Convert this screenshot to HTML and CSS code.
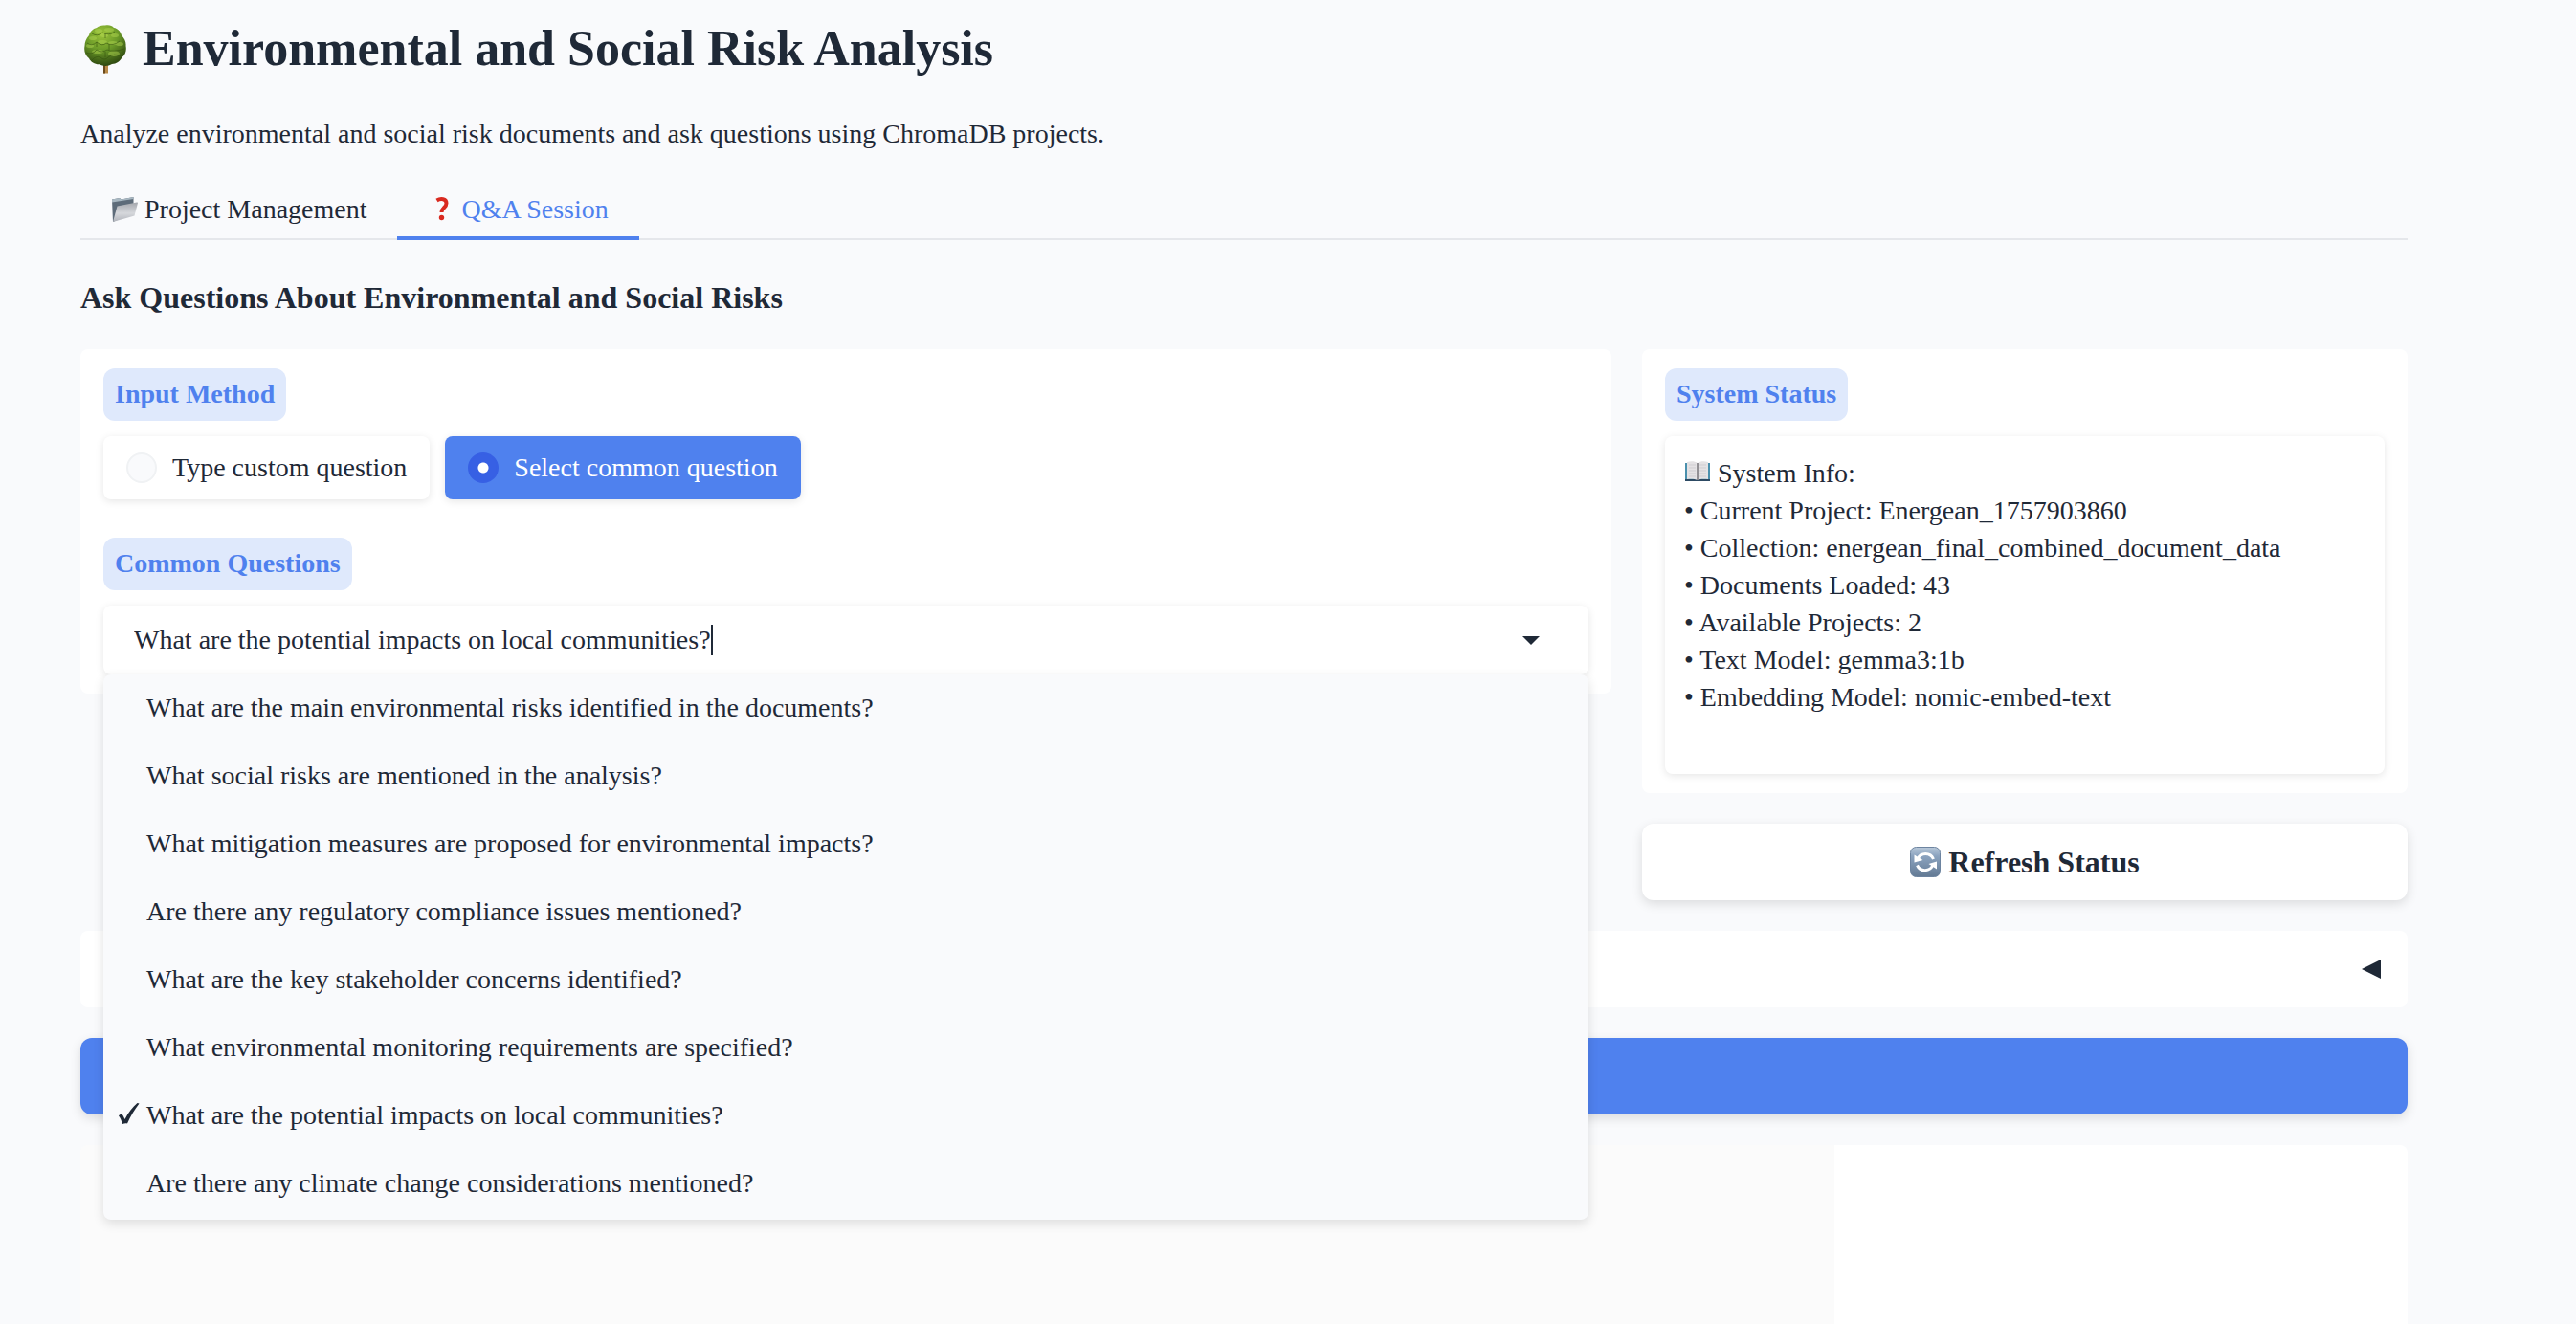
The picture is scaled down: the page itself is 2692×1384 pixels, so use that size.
FILE: index.html
```html
<!DOCTYPE html>
<html lang="en">
<head>
<meta charset="utf-8">
<title>Environmental and Social Risk Analysis</title>
<meta name="viewport" content="width=device-width, initial-scale=1">
<link rel="stylesheet" href="styles.css">
</head>
<body>
<main class="app">
  <h1 class="title">
    <svg class="tree" viewBox="0 0 46 51" aria-hidden="true">
      <defs>
        <radialGradient id="leaf" cx="42%" cy="22%" r="78%">
          <stop offset="0" stop-color="#9cc43a"/>
          <stop offset="0.5" stop-color="#6b9a28"/>
          <stop offset="1" stop-color="#2f4a10"/>
        </radialGradient>
      </defs>
      <path d="M21 40h5v10.500h-5z" fill="#b98a48"/>
      <path d="M21 40h2v10.500h-2z" fill="#6b4a1c"/>
      <path d="M23 .5c4-.8 7 .3 9 2.500 4 .5 7 4 8 8 3 3 5 7 4.500 11 1 5-.5 9-4 12-2 4-6 7-10.500 7-4 2.500-9 2.500-13 .3-5 .2-9-2.300-11-6.300C2 32 .500 27 1.500 22c0-4 1.500-8 4.500-11 1-4 4-7 8-8 2-1.700 5-3 9-2.500z" fill="url(#leaf)"/>
      <g fill="#b3d853" opacity="0.45">
        <ellipse cx="16" cy="6" rx="4" ry="2"/><ellipse cx="27" cy="5" rx="5" ry="2"/><ellipse cx="22" cy="11" rx="4" ry="2"/>
        <ellipse cx="10" cy="14" rx="4" ry="2"/><ellipse cx="33" cy="11" rx="4" ry="2"/><ellipse cx="20" cy="18" rx="5" ry="2"/>
        <ellipse cx="31" cy="19" rx="5" ry="2"/><ellipse cx="7" cy="22" rx="4" ry="2"/><ellipse cx="38" cy="20" rx="4" ry="2"/>
        <ellipse cx="15" cy="28" rx="6" ry="2"/><ellipse cx="32" cy="30" rx="6" ry="3"/>
      </g>
      <g fill="none" stroke="#36540f" stroke-width="1" opacity="0.6">
        <path d="M9 9q6 4 11-1q7 4 13-1M4 19q5 4 10-1q6 5 10 1q7 4 14-2M3 29q6 3 11-3q5 4 11 0q6 3 18-1M9 37q4-5 9-3q4 4 8 0q6-5 14-1M23 9v5M14 18v5M27 20v6M23 28v6"/>
      </g>
    </svg>
    <span>Environmental and Social Risk Analysis</span>
  </h1>
  <p class="lead">Analyze environmental and social risk documents and ask questions using ChromaDB projects.</p>

  <div class="tabs" role="tablist">
    <button class="tab" type="button" role="tab" aria-selected="false">
      <svg class="folder" viewBox="0 0 28 30" aria-hidden="true">
        <defs>
          <linearGradient id="flap" x1="0" y1="0" x2="0" y2="1">
            <stop offset="0" stop-color="#a4a7ad"/><stop offset="0.55" stop-color="#d6d8dc"/><stop offset="1" stop-color="#b0b3ba"/>
          </linearGradient>
        </defs>
        <path d="M1 4.500l8-1.500 1.500 1.500 13-2.500v17L2 28z" fill="#5d6b79"/>
        <path d="M1 4.500l8-1.500 1.500 1.500 13-2.500v2L1 7.500z" fill="#a9b8c2"/>
        <path d="M6.500 11.500l20.500-4c.8 0 1 .4.900 1L24.500 21.500 2 28z" fill="url(#flap)"/>
      </svg>
      <span>Project Management</span>
    </button>
    <button class="tab tab-active" type="button" role="tab" aria-selected="true">
      <svg class="question" viewBox="0 0 28 30" aria-hidden="true">
        <path d="M9.500 5.500c4-2.500 10-2 10 3 0 4.500-5 4.500-5 9.500" fill="none" stroke="#d92a20" stroke-width="4"/>
        <circle cx="14.500" cy="23.500" r="2.700" fill="#d92a20"/>
      </svg>
      <span>Q&amp;A Session</span>
    </button>
  </div>

  <h3 class="section-title">Ask Questions About Environmental and Social Risks</h3>

  <div class="stack">
    <div class="columns">
      <section class="card">
        <fieldset class="group">
          <legend class="badge">Input Method</legend>
          <div class="choices">
            <label class="choice"><input class="radio" type="radio" name="method">Type custom question</label>
            <label class="choice choice-on"><input class="radio" type="radio" name="method" checked>Select common question</label>
          </div>
        </fieldset>
        <div class="group">
          <label class="badge" for="common">Common Questions</label>
          <div class="combo">
            <div class="combo-field">
              <input class="combo-input" id="common" type="text" role="combobox" aria-expanded="true" aria-controls="common-list" value="What are the potential impacts on local communities?">
              <span class="caret" aria-hidden="true"></span>
              <svg class="chevron" viewBox="0 0 18 9" aria-hidden="true"><path d="M0 0h18L9 9z" fill="#1f2937"/></svg>
            </div>
            <ul class="options" id="common-list" role="listbox">
              <li class="option" role="option">What are the main environmental risks identified in the documents?</li>
              <li class="option" role="option">What social risks are mentioned in the analysis?</li>
              <li class="option" role="option">What mitigation measures are proposed for environmental impacts?</li>
              <li class="option" role="option">Are there any regulatory compliance issues mentioned?</li>
              <li class="option" role="option">What are the key stakeholder concerns identified?</li>
              <li class="option" role="option">What environmental monitoring requirements are specified?</li>
              <li class="option" role="option" aria-selected="true"><svg class="check" viewBox="0 0 22 22" aria-hidden="true"><path d="M0 13.500c1.500-2 4-2 5 .5l1.500 3C10 10 14.500 4.500 19.500 0l2 .5C16.500 7 12.500 13.500 9 21.500 7.500 21 5.500 21.500 4 22 3 18.500 1.500 15 0 13.500z" fill="#1f2937"/></svg>What are the potential impacts on local communities?</li>
              <li class="option" role="option">Are there any climate change considerations mentioned?</li>
            </ul>
          </div>
        </div>
      </section>

      <div class="side">
        <section class="card">
          <div class="group">
            <label class="badge" for="status">System Status</label>
            <div class="status">
              <svg class="book" viewBox="0 0 28 22" aria-hidden="true">
                <path d="M1 2h26v19H1z" fill="#4a90ad"/>
                <path d="M1 19h26v2H1z" fill="#2d4a63"/>
                <path d="M3 1c4-1 8-1 11 1v18c-3-1.500-7-1.500-11-1zM25 1c-4-1-8-1-11 1v18c3-1.500 7-1.500 11-1z" fill="#e4e2e4"/>
                <path d="M5 4h7M5 7h7M5 10h7M5 13h7M5 16h7M16 4h7M16 7h7M16 10h7M16 13h7M16 16h7" stroke="#cfcdd1" stroke-width="1"/>
                <path d="M14 2v18" stroke="#77757a" stroke-width="1.500"/>
              </svg>
              <textarea class="status-text" id="status" readonly>System Info:
• Current Project: Energean_1757903860
• Collection: energean_final_combined_document_data
• Documents Loaded: 43
• Available Projects: 2
• Text Model: gemma3:1b
• Embedding Model: nomic-embed-text</textarea>
            </div>
          </div>
        </section>
        <button class="button" type="button">
          <svg class="refresh" viewBox="0 0 32 32" aria-hidden="true">
            <defs>
              <linearGradient id="tile" x1="0" y1="0" x2="0" y2="1">
                <stop offset="0" stop-color="#b9c9da"/><stop offset="0.3" stop-color="#8ba3bf"/><stop offset="1" stop-color="#637a94"/>
              </linearGradient>
            </defs>
            <rect x="0.500" y="0.500" width="31" height="31" rx="6" fill="url(#tile)" stroke="#6d84a0"/>
            <path d="M8 13A9 9 0 0 1 24.500 13M24 19A9 9 0 0 1 7.500 19.500" fill="none" stroke="#fff" stroke-width="3"/>
            <path d="M4.500 8.500l9 5.500-9 2.500zM28 23.500V15.500l-8.500 2.500z" fill="#fff"/>
          </svg>
          <span>Refresh Status</span>
        </button>
      </div>
    </div>

    <button class="accordion" type="button" aria-label="Expand" aria-expanded="false">
      <svg class="arrow" viewBox="0 0 20 20" aria-hidden="true"><path d="M0 10L20 0v20z" fill="#1f2937"/></svg>
    </button>

    <button class="button button-primary" type="button" aria-label="Submit"></button>

    <div class="results">
      <div class="answer"></div>
      <div class="sources"></div>
    </div>
  </div>
</main>
</body>
</html>
```
FILE: styles.css
```css
:root {
  --page: #f9fafc;
  --ink: #1f2937;
  --blue: #4f81ee;
  --blue-deep: #3760e4;
  --blue-soft: #dfe9fc;
  --shadow: 0 2px 8px rgba(0, 0, 0, 0.1);
  --shadow-large: 0 4px 12px rgba(0, 0, 0, 0.12);
}

* {
  box-sizing: border-box;
}

html,
body {
  height: 100%;
  overflow: hidden;
}

body {
  margin: 0;
  background: var(--page);
  color: var(--ink);
  font-family: "Liberation Serif", "Times New Roman", serif;
  font-size: 28px;
  line-height: 42px;
}

button,
input,
textarea {
  font: inherit;
  color: inherit;
}

svg {
  flex: none;
  display: block;
}

.app {
  min-height: 100%;
  display: flex;
  flex-direction: column;
  padding: 17px 176px 0 84px;
}

.title {
  display: flex;
  align-items: center;
  gap: 16px;
  margin: 0;
  padding-left: 3px;
  font-size: 52px;
  line-height: 68px;
}

.tree {
  width: 46px;
  height: 51px;
}

.lead {
  margin: 34px 0 0;
}

/* Tabs */

.tabs {
  display: flex;
  margin-top: 26px;
  box-shadow: inset 0 -2px #e5e7eb;
}

.tab {
  display: flex;
  align-items: center;
  gap: 7px;
  height: 64px;
  padding: 0 32px;
  border: 0;
  background: none;
}

.tab-active {
  color: var(--blue);
  box-shadow: inset 0 -4px var(--blue);
}

.folder,
.question {
  width: 28px;
  height: 30px;
}

.section-title {
  margin: 36px 0 30px;
  font-size: 32px;
  line-height: 48px;
}

/* Panels */

.stack {
  flex: 1;
  display: flex;
  flex-direction: column;
  gap: 32px;
}

.columns {
  display: grid;
  grid-template-columns: 2fr 1fr;
  gap: 32px;
  align-items: start;
}

.side {
  display: flex;
  flex-direction: column;
  gap: 32px;
}

.card {
  display: flex;
  flex-direction: column;
  gap: 40px;
  padding: 20px 24px;
  border-radius: 8px;
  background: #fff;
}

.group {
  display: flex;
  flex-direction: column;
  align-items: flex-start;
  gap: 16px;
  min-width: 0;
  margin: 0;
  padding: 0;
  border: 0;
}

.badge {
  float: left;
  height: 55px;
  padding: 6px 12px;
  border-radius: 12px;
  background: var(--blue-soft);
  color: var(--blue);
  font-weight: bold;
}

.choices {
  clear: both;
  display: flex;
  gap: 16px;
}

.choice {
  display: flex;
  align-items: center;
  gap: 16px;
  height: 66px;
  padding: 0 24px;
  border-radius: 8px;
  background: #fff;
  box-shadow: var(--shadow);
}

.choice-on {
  background: var(--blue);
  color: #fff;
}

.radio {
  appearance: none;
  width: 32px;
  height: 32px;
  margin: 0;
  border: 2px solid #f0f2f4;
  border-radius: 50%;
  background: var(--page);
}

.radio:checked {
  border-color: var(--blue-deep);
  background: radial-gradient(circle, #fff 5px, var(--blue-deep) 6px);
}

/* Question picker */

.combo {
  position: relative;
  width: 100%;
}

.combo-field {
  display: flex;
  align-items: center;
  height: 72px;
  padding: 0 51px 0 32px;
  border-radius: 8px;
  background: #fff;
  box-shadow: var(--shadow);
}

.combo-input {
  field-sizing: content;
  min-width: 0;
  height: 42px;
  padding: 0;
  border: 0;
  outline: 0;
  background: none;
}

.caret {
  width: 2px;
  height: 32px;
  background: var(--ink);
}

.chevron {
  width: 18px;
  height: 9px;
  margin-left: auto;
}

.options {
  position: absolute;
  z-index: 1;
  top: 100%;
  left: 0;
  right: 0;
  margin: 0;
  padding: 0 0 2px;
  border-radius: 8px;
  background: var(--page);
  box-shadow: var(--shadow-large);
  list-style: none;
}

.option {
  position: relative;
  height: 71px;
  padding: 14px 45px;
}

.check {
  position: absolute;
  top: 22px;
  left: 16px;
  width: 22px;
  height: 22px;
}

/* System status */

.status {
  position: relative;
  width: 100%;
}

.book {
  position: absolute;
  top: 26px;
  left: 20px;
  width: 28px;
  height: 22px;
}

.status-text {
  display: block;
  width: 100%;
  height: 353px;
  padding: 19px 20px;
  border: 0;
  border-radius: 8px;
  outline: 0;
  background: #fff;
  box-shadow: var(--shadow);
  line-height: 39px;
  text-indent: 35px;
  resize: none;
}

/* Buttons */

.button {
  display: flex;
  align-items: center;
  justify-content: center;
  gap: 8px;
  width: 100%;
  height: 80px;
  border: 0;
  border-radius: 12px;
  background: #fff;
  box-shadow: var(--shadow-large);
  font-size: 32px;
  font-weight: bold;
}

.button-primary {
  background: var(--blue);
}

.refresh {
  width: 32px;
  height: 32px;
}

.accordion {
  display: flex;
  align-items: center;
  justify-content: flex-end;
  height: 80px;
  padding: 0 28px;
  border: 0;
  border-radius: 8px;
  background: #fff;
}

.arrow {
  width: 20px;
  height: 20px;
}

.results {
  flex: 1;
  display: flex;
  overflow: hidden;
  border-radius: 8px 8px 0 0;
}

.answer {
  flex: 1833;
  background: #fbfbfb;
}

.sources {
  flex: 599;
  background: #fff;
}
```
